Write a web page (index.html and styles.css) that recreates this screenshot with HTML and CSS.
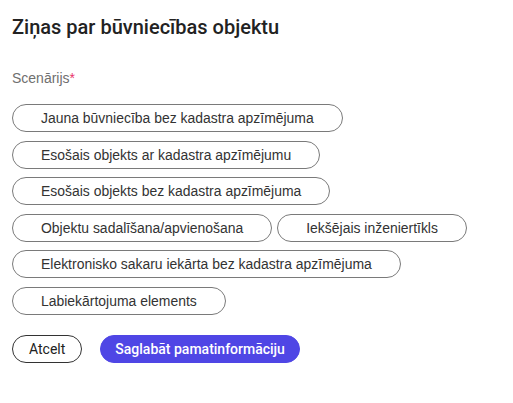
FILE: index.html
```html
<!DOCTYPE html>
<html lang="lv">
<head>
  <meta charset="UTF-8" />
  <meta name="viewport" content="width=device-width, initial-scale=1.0"/>
  <title>Ziņas par būvniecības objektu</title>
  <link rel="stylesheet" href="styles.css">
</head>
<body>
  <div class="panel">
    <h1>Ziņas par būvniecības objektu</h1>

    <div class="field-label">Scenārijs<span class="req">*</span></div>

    <div class="chips">
      <button class="chip">Jauna būvniecība bez kadastra apzīmējuma</button>
      <button class="chip">Esošais objekts ar kadastra apzīmējumu</button>
      <button class="chip">Esošais objekts bez kadastra apzīmējuma</button>
      <button class="chip">Objektu sadalīšana/apvienošana</button>
      <button class="chip">Iekšējais inženiertīkls</button>
      <button class="chip">Elektronisko sakaru iekārta bez kadastra apzīmējuma</button>
      <button class="chip">Labiekārtojuma elements</button>
    </div>

    <div class="actions">
      <button class="btn btn-outline">Atcelt</button>
      <button class="btn btn-primary">Saglabāt pamatinformāciju</button>
    </div>
  </div>
</body>
</html>
```

FILE: styles.css
```css
body {
  margin: 0;
  background-color: #fff;
  font-family: Roboto, "Liberation Sans", Arial, sans-serif;
}
.panel {
  padding: 15px 12px;
}
h1 {
  margin: 0;
  font-size: 20px;
  line-height: 24px;
  font-weight: 500;
  color: #222;
}
.field-label {
  margin-top: 31px;
  font-family: "Liberation Sans", Arial, sans-serif;
  font-size: 14px;
  line-height: 16px;
  color: #6f6f6f;
}
.req {
  color: #e8336b;
}
.chips {
  margin-top: 18px;
  display: flex;
  flex-wrap: wrap;
  align-items: flex-start;
  column-gap: 5px;
  row-gap: 8.5px;
  max-width: 489px;
}
.chip {
  height: 28px;
  padding: 0 28px;
  background: #fff;
  border: 1px solid #7a7a7a;
  border-radius: 14px;
  font-family: "Liberation Sans", Arial, sans-serif;
  font-size: 13.95px;
  line-height: 26px;
  color: #333;
  cursor: pointer;
}
.actions {
  margin-top: 20px;
  display: flex;
  gap: 18px;
}
.btn {
  height: 28px;
  border-radius: 14px;
  font-family: Roboto, sans-serif;
  font-size: 14px;
  line-height: 26px;
  cursor: pointer;
}
.btn-outline {
  padding: 0 16px;
  background: #fff;
  border: 1px solid #333;
  color: #222;
}
.btn-primary {
  padding: 0 14px;
  background-color: #4f46e5;
  border: 1px solid #4f46e5;
  color: #fff;
  font-weight: 500;
}
```
